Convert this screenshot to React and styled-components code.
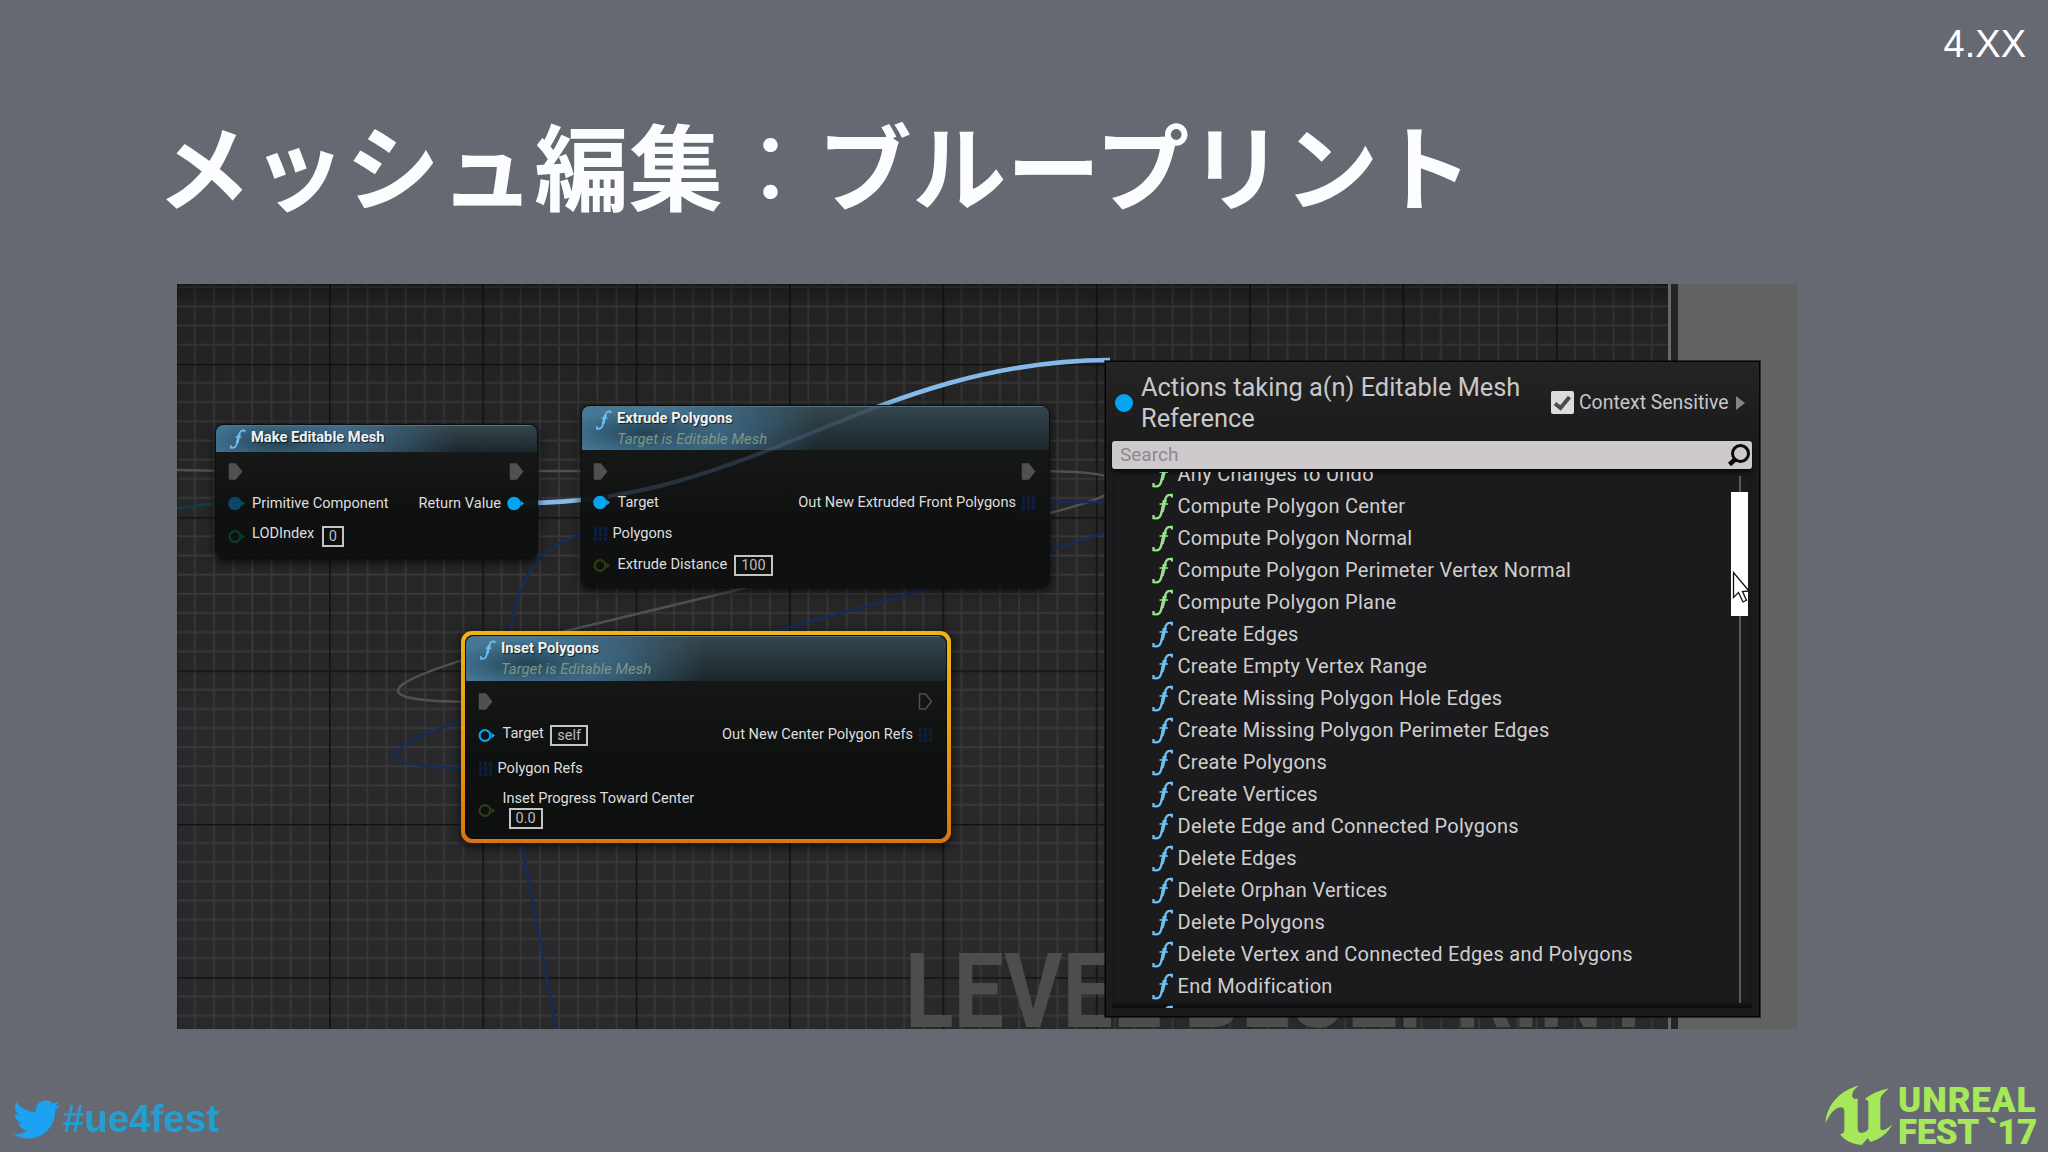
import React from "react";
import styled, { createGlobalStyle } from "styled-components";
import { FaTwitter } from "react-icons/fa";

const GlobalStyle = createGlobalStyle`
  body {
    margin: 0;
    background: #666971;
  }
  * {
    box-sizing: border-box;
  }
`;

const Slide = styled.main`
  display: flex;
  flex-direction: column;
  width: 2048px;
  height: 1152px;
  overflow: hidden;
  background: #666971;
  font-family: Roboto, "Liberation Sans", sans-serif;
`;

const Version = styled.div`
  height: 88px;
  padding-right: 22px;
  color: #fff;
  font: 38px/88px "Liberation Sans", sans-serif;
  text-align: right;
`;

const Title = styled.h1`
  height: 196px;
  margin: 0;
  padding-left: 157px;
  color: #fcfdff;
  font: 700 94px/150px "Noto Sans CJK JP", sans-serif;
  letter-spacing: 0.4px;
  white-space: nowrap;
`;

const Colon = styled.span`
  font-weight: 400;
`;

const Shot = styled.section`
  position: relative;
  display: flex;
  flex: none;
  width: 1621px;
  height: 745px;
  margin-left: 177px;
  overflow: hidden;
  background: #616262;
`;

const Graph = styled.div`
  position: relative;
  width: 1491px;
  overflow: hidden;
  background: linear-gradient(#262626 45%, #29282a 60%);
`;

const Divider = styled.div`
  width: 10px;
  background: #242526;
  border-left: 3px solid #676869;
`;

const Layer = styled.svg`
  position: absolute;
  left: 0;
  top: 0;
`;

const Watermark = styled.div`
  position: absolute;
  left: 728px;
  top: 646px;
  color: #4d4d4e;
  font-size: 104px;
  font-weight: 700;
  line-height: 124px;
  white-space: nowrap;
  transform: scaleX(0.862);
  transform-origin: left;
`;

const Node = styled.article`
  position: absolute;
  left: ${(p) => p.$x}px;
  top: ${(p) => p.$y}px;
  width: ${(p) => p.$w}px;
  height: ${(p) => p.$h}px;
  border-radius: 8px;
  overflow: hidden;
  background: linear-gradient(rgba(25, 26, 26, 0.93), rgba(14, 15, 15, 0.97) 65%);
  box-shadow: 0 0 0 1px #0b0d0e
    ${(p) => !p.$selected && ", 0 3px 8px 2px rgba(0, 0, 0, 0.6)"};
`;

const Selection = styled.div`
  position: absolute;
  left: 284px;
  top: 347px;
  width: 490px;
  height: 212px;
  border-radius: 11px;
  background: linear-gradient(#efb414, #e99c14 50%, #da7410);
  box-shadow: 0 3px 8px 2px rgba(0, 0, 0, 0.5);

  &::after {
    content: "";
    position: absolute;
    inset: 4px;
    border-radius: 8px;
    background: #121313;
  }
`;

const NodeHead = styled.header`
  display: flex;
  gap: 5px;
  height: ${(p) => p.$h}px;
  padding: 3px 0 0 13px;
  border-top: 1px solid #547484;
  background: radial-gradient(
      ellipse 75px 24px at 62px 60%,
      rgba(26, 48, 62, 0.75),
      transparent
    ),
    radial-gradient(
      ellipse 240px 100px at 0 50%,
      rgba(70, 122, 155, 0.95) 35%,
      rgba(64, 108, 138, 0.75) 65%,
      transparent
    ),
    linear-gradient(rgba(56, 74, 82, 0.9), rgba(27, 41, 46, 0.9));
`;

const NodeTitle = styled.div`
  color: #eef3f5;
  font-size: 14.7px;
  font-weight: 700;
  line-height: 17px;
  white-space: nowrap;
  text-shadow: 1px 1px 1px rgba(0, 0, 0, 0.7);
`;

const NodeSub = styled.div`
  margin-top: 4px;
  color: #7b9681;
  font-size: 14.9px;
  font-style: italic;
  line-height: 17px;
  white-space: nowrap;
`;

const NodeBody = styled.div`
  display: flex;
  justify-content: space-between;
  padding: ${(p) => p.$pad || "5px 14px 0 13px"};
`;

const PinColumn = styled.div`
  display: flex;
  flex-direction: column;
  align-items: ${(p) => (p.$right ? "flex-end" : "flex-start")};
`;

const PinRow = styled.div`
  display: flex;
  align-items: center;
  gap: ${(p) => p.$gap || 9}px;
  height: ${(p) => p.$h}px;
`;

const PinLabel = styled.span`
  padding-bottom: ${(p) => p.$raise || 0}px;
  color: #dedede;
  font-size: 14.6px;
  line-height: 17px;
  white-space: nowrap;
`;

const PinStack = styled.div`
  display: flex;
  flex-direction: column;
  align-items: flex-start;
  gap: 1px;
  padding-bottom: 2px;
`;

const ValueBox = styled.span`
  flex: none;
  height: 21px;
  padding: 0 5px;
  margin-left: ${(p) => p.$indent || -1}px;
  border: 2px solid #c4c4c4;
  color: #bdbdbd;
  font-size: 14.5px;
  line-height: 17px;
`;

const Menu = styled.div`
  position: absolute;
  left: 928px;
  top: 77px;
  display: flex;
  flex-direction: column;
  width: 655px;
  height: 656px;
  padding: 0 7px 8px 6px;
  border: 1px solid #050505;
  outline: 1px solid rgba(10, 10, 10, 0.6);
  background: linear-gradient(#242424, #1b1a1c 12%, #1b1a1c);
`;

const MenuHead = styled.header`
  display: flex;
  align-items: center;
  height: 79px;
  padding: 2px 7px 0 3px;
`;

const TypeDot = styled.i`
  width: 18px;
  height: 18px;
  margin-right: 8px;
  border-radius: 50%;
  background: #03a4f2;
`;

const MenuTitle = styled.div`
  width: 410px;
  color: #c8c8c8;
  font-size: 25.4px;
  line-height: 30.5px;
`;

const CheckBox = styled.span`
  display: flex;
  width: 23px;
  height: 23px;
  margin-right: 5px;
  border-radius: 2px;
  background: #dcdcdc;
`;

const CheckLabel = styled.span`
  flex: 1;
  color: #c6c6c6;
  font-size: 19.4px;
  white-space: nowrap;
`;

const Search = styled.div`
  display: flex;
  align-items: center;
  justify-content: space-between;
  height: 28px;
  padding: 0 1px 1px 8px;
  border-radius: 3px;
  background: #cdc9cd;
  color: #8e8a8e;
  font-size: 19px;
  box-shadow: 0 3px 4px #09090a;
`;

const ListFrame = styled.div`
  display: flex;
  flex: 1;
  min-height: 0;
  margin-top: 3px;
  overflow: hidden;
  box-shadow: inset 0 -5px 4px -2px #0b0b0c;
`;

const List = styled.ul`
  flex: 1;
  margin: -14px 0 0;
  padding: 0 0 0 40px;
  list-style: none;
`;

const Item = styled.li`
  display: flex;
  align-items: center;
  gap: 4.5px;
  height: 32px;
  color: #cfcfcf;
  font-size: 20px;
  letter-spacing: 0.28px;
  white-space: nowrap;
`;

const Track = styled.div`
  display: flex;
  flex-direction: column;
  align-items: center;
  width: 17px;
  margin: 4px 4px 5px 0;
  background: linear-gradient(#5a5a5c, #5a5a5c) center / 2px 100% no-repeat;
`;

const Thumb = styled.div`
  width: 17px;
  height: 124px;
  margin-top: 16px;
  background: #fff;
`;

const Cursor = styled.svg`
  position: absolute;
  left: 1555px;
  top: 287px;
`;

const Footer = styled.footer`
  display: flex;
  justify-content: space-between;
  height: 123px;
  padding: 56px 12px 0 13px;
`;

const HashTag = styled.div`
  display: flex;
  align-items: center;
  gap: 3px;
  height: 68px;
  color: #219fd1;
  font: 700 38.5px/40px "Liberation Sans", sans-serif;
`;

const Brand = styled.div`
  display: flex;
  gap: 5px;
`;

const BrandText = styled.div`
  width: 138px;
  color: #a6e85a;
  font-size: 35px;
  font-weight: 900;
  line-height: 32px;
  white-space: pre;
`;

const BrandLine = styled.div`
  letter-spacing: ${(p) => p.$track}px;
`;

const GREEN = "#92e28c";
const BLUE = "#6fc0f2";

const FnIcon = ({ color = BLUE, w = 21, h = 27 }) => (
  <svg width={w} height={h} viewBox="0 0 21 27" style={{ flex: "none" }}>
    <path
      d="M1.500 22v3.200c6 .8 7-1.200 8.500-7.200l2.600-10C13.900 3 15.500 1.400 20 2v2.500"
      fill="none"
      stroke={color}
      strokeWidth="2.300"
    />
    <path d="M10.800 7 15 6.500 11.700 19 8.200 20z" fill={color} />
    <path d="M7.500 11h8.500" stroke={color} strokeWidth="1.500" />
  </svg>
);

const ExecPin = ({ hollow }) => (
  <svg width="15" height="17" viewBox="0 0 15 17">
    <path
      d="M1.500 1h6l6 7.500-6 7.500h-6z"
      fill={hollow ? "none" : "#505050"}
      stroke="#505050"
      strokeWidth="1.500"
      strokeLinejoin="round"
    />
  </svg>
);

const DotPin = ({ color, hollow }) => (
  <svg width="17" height="15" viewBox="0 0 17 15">
    <circle
      cx="7"
      cy="7.500"
      r={hollow ? 5.4 : 6.8}
      fill={hollow ? "none" : color}
      stroke={hollow ? color : "none"}
      strokeWidth="2.200"
    />
    <path d="M13.500 4.500 17 7.500l-3.500 3z" fill={color} />
  </svg>
);

const ArrayPin = () => (
  <svg width="15" height="15" viewBox="0 0 15 15" fill="#0c1f42">
    {[1, 6, 11].map((x) =>
      [1, 6, 11].map((y) => (
        <rect key={`${x}-${y}`} x={x} y={y} width="3" height="4.200" />
      ))
    )}
  </svg>
);

const actions = [
  ["Any Changes to Undo", GREEN],
  ["Compute Polygon Center", GREEN],
  ["Compute Polygon Normal", GREEN],
  ["Compute Polygon Perimeter Vertex Normal", GREEN],
  ["Compute Polygon Plane", GREEN],
  ["Create Edges", BLUE],
  ["Create Empty Vertex Range", BLUE],
  ["Create Missing Polygon Hole Edges", BLUE],
  ["Create Missing Polygon Perimeter Edges", BLUE],
  ["Create Polygons", BLUE],
  ["Create Vertices", BLUE],
  ["Delete Edge and Connected Polygons", BLUE],
  ["Delete Edges", BLUE],
  ["Delete Orphan Vertices", BLUE],
  ["Delete Polygons", BLUE],
  ["Delete Vertex and Connected Edges and Polygons", BLUE],
  ["End Modification", BLUE],
  ["", BLUE],
];

// grid cell is 19.17px, every eighth line is a dark one
const CELL = 19.17;
const MAJOR = CELL * 8;

const Grid = () => (
  <Layer width="1491" height="745">
    <defs>
      <pattern
        id="grid"
        x="152"
        y="79.800"
        width={MAJOR}
        height={MAJOR}
        patternUnits="userSpaceOnUse"
      >
        {[1, 2, 3, 4, 5, 6, 7].map((i) => (
          <path
            key={i}
            d={`M${i * CELL} 0V${MAJOR}M0 ${i * CELL}H${MAJOR}`}
            stroke="#38383a"
            strokeWidth="1.800"
          />
        ))}
        <path
          d={`M.8 0V${MAJOR}M0 .8H${MAJOR}`}
          stroke="#121213"
          strokeWidth="1.600"
        />
      </pattern>
      <linearGradient id="shade" x2="0" y2="1">
        <stop offset="0" stopColor="#000" stopOpacity=".35" />
        <stop offset=".03" stopColor="#000" stopOpacity=".1" />
        <stop offset=".3" stopColor="#000" stopOpacity="0" />
      </linearGradient>
    </defs>
    <rect width="1491" height="745" fill="url(#grid)" />
    <rect width="1491" height="745" fill="url(#shade)" />
  </Layer>
);

const DRAG_WIRE = "M524 503C754 503 872 361 1110 360";

const Wires = () => (
  <Layer width="1491" height="745" viewBox="177 284 1491 745" fill="none">
    <g stroke="#505051" strokeWidth="2.500">
      <path d="M177 470 229 471M524 471H594" />
      <path d="M1035 471C1130 471 1155 486 1050 513L745 588 570 630C368 682 353 702 478 702" />
    </g>
    <path d="M177 508C195 507 205 503 229 503" stroke="#123c4a" strokeWidth="2.500" />
    <g stroke="#152d5c" strokeWidth="2.500">
      <path d="M594 533C545 538 526 570 516 604 500 660 508 780 526 866L556 1029" />
      <path d="M1035 502H1110M1110 532C1060 545 960 580 888 600L780 630C600 680 470 715 461 721 375 750 365 768 478 768" />
    </g>
    <path d={DRAG_WIRE} stroke="#86b9ea" strokeWidth="4.500" />
  </Layer>
);

// the dragged wire shows faintly through the node it passes under
const GhostWire = () => (
  <Layer width="1491" height="745" viewBox="177 284 1491 745" fill="none">
    <clipPath id="node-area">
      <rect x="608" y="407" width="441" height="180" />
    </clipPath>
    <path
      d={DRAG_WIRE}
      stroke="#86b9ea"
      strokeWidth="4"
      strokeOpacity=".15"
      clipPath="url(#node-area)"
    />
  </Layer>
);

const Logo = () => (
  <svg width="68" height="61" viewBox="77 75 204 183" fill="#a6e85a">
    <path d="M178 77C128 88 80 132 79 190c9-22 21-40 37-47 12-4 19 0 19 10v54c0 11-5 15-13 16 13 17 35 30 65 32l18-20 9 11c32-9 54-30 65-53-17 17-36 24-36 11v-83c0-14 12-23 26-36-32 8-55 17-74 34 8-1 12 3 12 10v78c-7 14-32 17-32-1v-91c-7 3-14 2-16-6-2-11 6-23 19-32z" />
  </svg>
);

const App = () => {
  return (
    <Slide>
      <GlobalStyle />
      <Version>4.XX</Version>
      <Title>
        メッシュ編集<Colon>：</Colon>ブループリント
      </Title>
      <Shot>
        <Graph>
          <Grid />
          <Watermark>LEVEL BLUEPRINT</Watermark>
          <Wires />

          <Node $x={39} $y={141} $w={321} $h={133}>
            <NodeHead $h={27}>
              <FnIcon w={17} h={20} />
              <NodeTitle>Make Editable Mesh</NodeTitle>
            </NodeHead>
            <NodeBody $pad="3px 13px 0 12px">
              <PinColumn>
                <PinRow $h={32}>
                  <ExecPin />
                </PinRow>
                <PinRow $h={32} $gap={7}>
                  <DotPin color="#0b4867" />
                  <PinLabel>Primitive Component</PinLabel>
                </PinRow>
                <PinRow $h={34} $gap={7}>
                  <DotPin color="#0d3b2c" hollow />
                  <PinLabel $raise={5}>LODIndex</PinLabel>
                  <ValueBox $indent={0.5}>0</ValueBox>
                </PinRow>
              </PinColumn>
              <PinColumn $right>
                <PinRow $h={32}>
                  <ExecPin />
                </PinRow>
                <PinRow $h={32} $gap={6}>
                  <PinLabel>Return Value</PinLabel>
                  <DotPin color="#03a4f2" />
                </PinRow>
              </PinColumn>
            </NodeBody>
          </Node>

          <Node $x={405} $y={122} $w={467} $h={181}>
            <NodeHead $h={44}>
              <FnIcon w={17} h={20} />
              <div>
                <NodeTitle>Extrude Polygons</NodeTitle>
                <NodeSub>Target is Editable Mesh</NodeSub>
              </div>
            </NodeHead>
            <NodeBody $pad="5px 13px 0 11px">
              <PinColumn>
                <PinRow $h={32}>
                  <ExecPin />
                </PinRow>
                <PinRow $h={31} $gap={7.5}>
                  <DotPin color="#03a4f2" />
                  <PinLabel>Target</PinLabel>
                </PinRow>
                <PinRow $h={31} $gap={4.5}>
                  <ArrayPin />
                  <PinLabel>Polygons</PinLabel>
                </PinRow>
                <PinRow $h={33} $gap={7.5}>
                  <DotPin color="#28400f" hollow />
                  <PinLabel $raise={3}>Extrude Distance</PinLabel>
                  <ValueBox $indent={-0.5}>100</ValueBox>
                </PinRow>
              </PinColumn>
              <PinColumn $right>
                <PinRow $h={32}>
                  <ExecPin />
                </PinRow>
                <PinRow $h={31} $gap={5}>
                  <PinLabel>Out New Extruded Front Polygons</PinLabel>
                  <ArrayPin />
                </PinRow>
              </PinColumn>
            </NodeBody>
          </Node>
          <GhostWire />

          <Selection />
          <Node $x={289} $y={352} $w={480} $h={202} $selected>
            <NodeHead $h={45}>
              <FnIcon w={17} h={20} />
              <div>
                <NodeTitle>Inset Polygons</NodeTitle>
                <NodeSub>Target is Editable Mesh</NodeSub>
              </div>
            </NodeHead>
            <NodeBody $pad="4px 13px 0 12px">
              <PinColumn>
                <PinRow $h={33}>
                  <ExecPin />
                </PinRow>
                <PinRow $h={34} $gap={7.5}>
                  <DotPin color="#03a4f2" hollow />
                  <PinLabel $raise={3}>Target</PinLabel>
                  <ValueBox>self</ValueBox>
                </PinRow>
                <PinRow $h={33} $gap={4.5}>
                  <ArrayPin />
                  <PinLabel>Polygon Refs</PinLabel>
                </PinRow>
                <PinRow $h={51} $gap={7.5}>
                  <DotPin color="#2b3d1c" hollow />
                  <PinStack>
                    <PinLabel>Inset Progress Toward Center</PinLabel>
                    <ValueBox $indent={6}>0.0</ValueBox>
                  </PinStack>
                </PinRow>
              </PinColumn>
              <PinColumn $right>
                <PinRow $h={33}>
                  <ExecPin hollow />
                </PinRow>
                <PinRow $h={32} $gap={5}>
                  <PinLabel>Out New Center Polygon Refs</PinLabel>
                  <ArrayPin />
                </PinRow>
              </PinColumn>
            </NodeBody>
          </Node>
        </Graph>
        <Divider />

        <Menu>
          <MenuHead>
            <TypeDot />
            <MenuTitle>Actions taking a(n) Editable Mesh Reference</MenuTitle>
            <CheckBox>
              <svg width="23" height="23" viewBox="0 0 23 23" fill="none">
                <path d="M4 12.500 9.500 17 18.500 6" stroke="#4c4c4c" strokeWidth="4" />
              </svg>
            </CheckBox>
            <CheckLabel>Context Sensitive</CheckLabel>
            <svg width="9" height="14" viewBox="0 0 9 14">
              <path d="M0 0 9 7 0 14z" fill="#858585" />
            </svg>
          </MenuHead>
          <Search>
            Search
            <svg width="24" height="24" viewBox="0 0 24 24" fill="none" stroke="#0a0a0a">
              <circle cx="13.500" cy="10.500" r="8" strokeWidth="3" />
              <path d="M8 16.500 2.500 21.500" strokeWidth="4.500" />
            </svg>
          </Search>
          <ListFrame>
            <List>
              {actions.map(([label, color], i) => (
                <Item key={i}>
                  <FnIcon color={color} />
                  {label}
                </Item>
              ))}
            </List>
            <Track>
              <Thumb />
            </Track>
          </ListFrame>
        </Menu>

        <Cursor width="20" height="34" viewBox="0 0 20 34">
          <path
            d="M1.500 1.500v25l5-5 4.500 9.500 3.500-1.700-4-8.800 6.500-.5z"
            fill="#fff"
            stroke="#111"
            strokeWidth="1.300"
          />
        </Cursor>
      </Shot>

      <Footer>
        <HashTag>
          <FaTwitter size={47} color="#1da1f2" />
          #ue4fest
        </HashTag>
        <Brand>
          <Logo />
          <BrandText>
            <BrandLine $track={0.9}>UNREAL</BrandLine>
            <BrandLine $track={-0.5}>FEST `17</BrandLine>
          </BrandText>
        </Brand>
      </Footer>
    </Slide>
  );
};

export default App;
